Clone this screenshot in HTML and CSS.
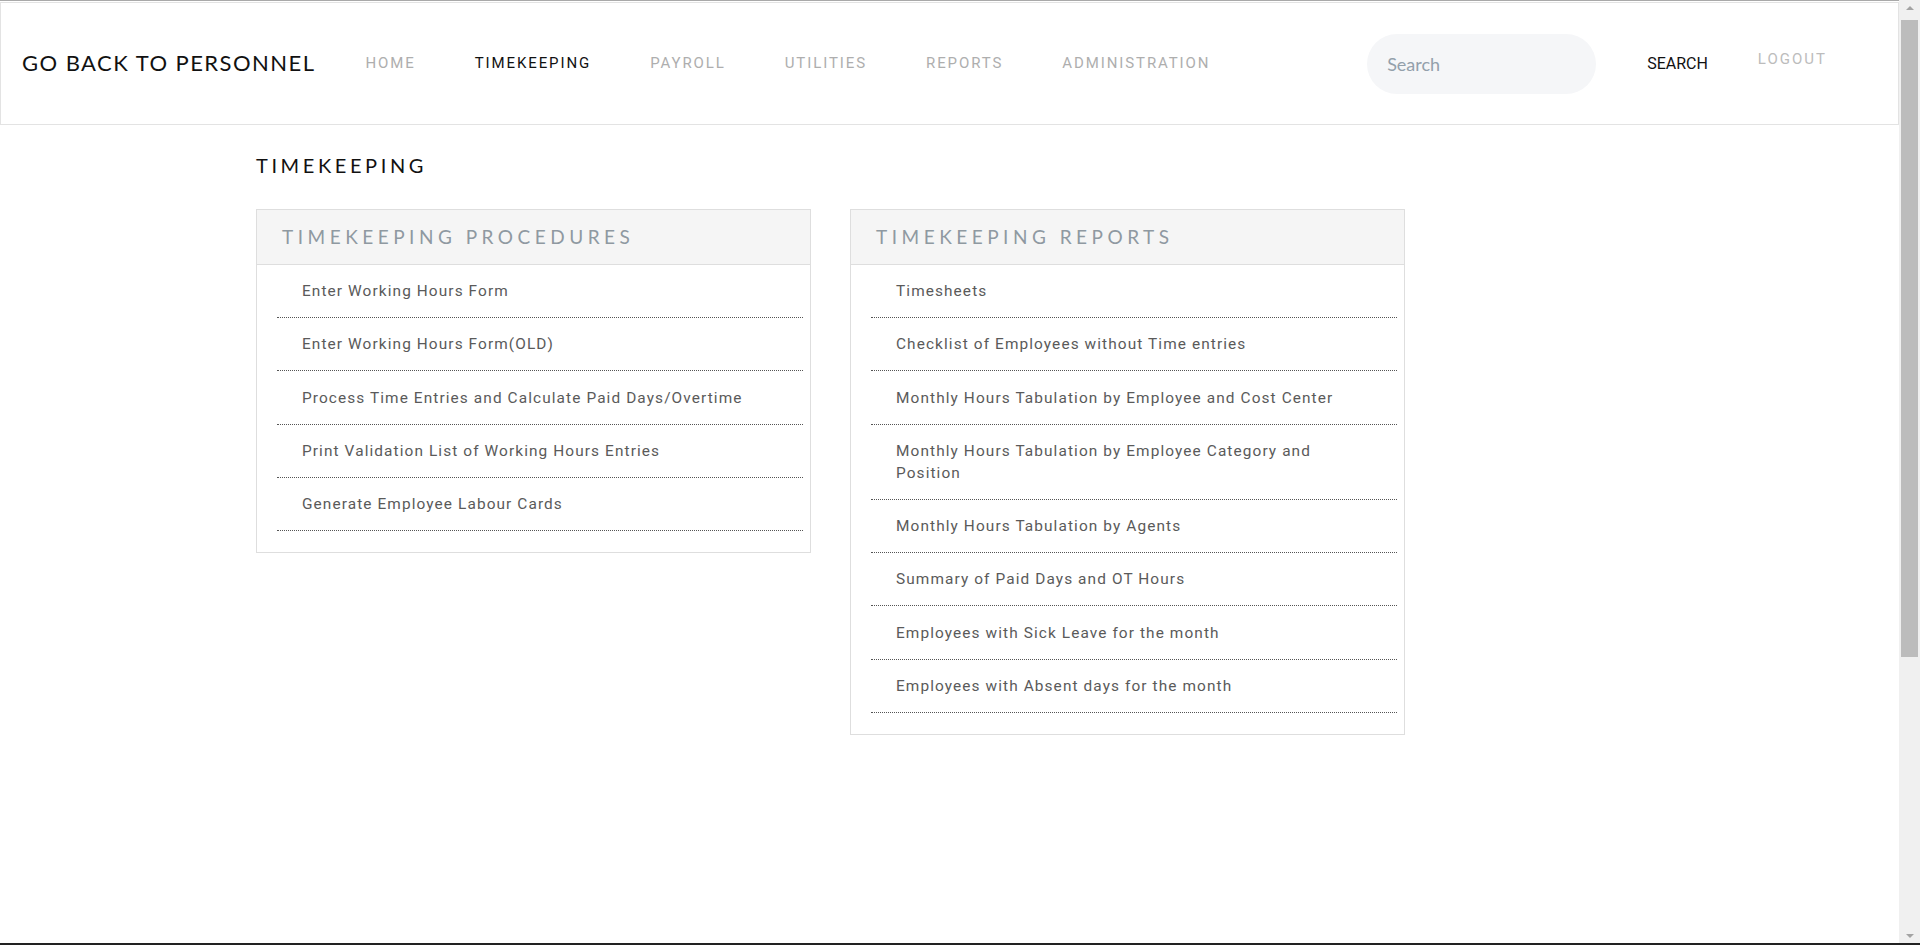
FILE: index.html
```html
<!DOCTYPE html>
<html lang="en">
<head>
<meta charset="utf-8">
<title>Timekeeping</title>
<link rel="stylesheet" href="styles.css">
</head>
<body>
<header class="topbar">
  <a class="brand" href="#">GO BACK TO PERSONNEL</a>
  <nav class="mainnav">
    <a class="navlink" href="#">HOME</a>
    <a class="navlink active" href="#">TIMEKEEPING</a>
    <a class="navlink" href="#">PAYROLL</a>
    <a class="navlink" href="#">UTILITIES</a>
    <a class="navlink" href="#">REPORTS</a>
    <a class="navlink" href="#">ADMINISTRATION</a>
  </nav>
  <form class="searchform">
    <input class="searchinput" type="text" placeholder="Search">
    <button class="searchbtn" type="button">SEARCH</button>
  </form>
  <a class="logout" href="#">LOGOUT</a>
</header>
<main class="page">
  <h1 class="pagetitle">TIMEKEEPING</h1>
  <div class="cards">
    <section class="card">
      <h2 class="cardhead">TIMEKEEPING PROCEDURES</h2>
      <ul class="linklist">
        <li class="linkitem"><a href="#">Enter Working Hours Form</a></li>
        <li class="linkitem"><a href="#">Enter Working Hours Form(OLD)</a></li>
        <li class="linkitem"><a href="#">Process Time Entries and Calculate Paid Days/Overtime</a></li>
        <li class="linkitem"><a href="#">Print Validation List of Working Hours Entries</a></li>
        <li class="linkitem"><a href="#">Generate Employee Labour Cards</a></li>
      </ul>
    </section>
    <section class="card">
      <h2 class="cardhead">TIMEKEEPING REPORTS</h2>
      <ul class="linklist">
        <li class="linkitem"><a href="#">Timesheets</a></li>
        <li class="linkitem"><a href="#">Checklist of Employees without Time entries</a></li>
        <li class="linkitem"><a href="#">Monthly Hours Tabulation by Employee and Cost Center</a></li>
        <li class="linkitem"><a href="#">Monthly Hours Tabulation by Employee Category and Position</a></li>
        <li class="linkitem"><a href="#">Monthly Hours Tabulation by Agents</a></li>
        <li class="linkitem"><a href="#">Summary of Paid Days and OT Hours</a></li>
        <li class="linkitem"><a href="#">Employees with Sick Leave for the month</a></li>
        <li class="linkitem"><a href="#">Employees with Absent days for the month</a></li>
      </ul>
    </section>
  </div>
</main>
<div class="scrollbar" aria-hidden="true">
  <span class="scroll-arrow up"></span>
  <span class="scroll-thumb"></span>
  <span class="scroll-arrow down"></span>
</div>
<div class="frame-bottom" aria-hidden="true"></div>
</body>
</html>
```
FILE: styles.css
```css
* { box-sizing: border-box; }
html {
  border-top: 1px solid #a9a9a9;
}
body {
  margin: 0 21px 0 0;
  min-height: 1350px;
  font-family: Roboto, "Liberation Sans", sans-serif;
  color: #333;
  background: #fff;
}
a { text-decoration: none; color: inherit; }

.topbar {
  margin-top: 1px;
  height: 123px;
  border: 1px solid #e3e3e3;
  display: flex;
  align-items: center;
  padding: 0 71px 3px 21px;
}
.brand {
  font-family: Lato, "Open Sans", sans-serif;
  font-size: 22px;
  letter-spacing: 1.45px;
  color: #111;
  white-space: nowrap;
}
.mainnav {
  display: flex;
  gap: 59px;
  margin-left: 50px;
  margin-top: 2px;
}
.navlink {
  font-size: 15px;
  letter-spacing: 1.9px;
  color: #aeaeae;
}
.navlink.active { color: #111; }

.searchform {
  margin-left: auto;
  margin-top: 3px;
  display: flex;
  align-items: center;
}
.searchinput {
  width: 229px;
  height: 60px;
  border: none;
  border-radius: 30px;
  background: #f5f6f8;
  padding: 0 20px;
  font-family: Lato, "Open Sans", sans-serif;
  font-size: 18px;
  color: #333;
  outline: none;
}
.searchinput::placeholder { color: #93a0ab; }
.searchbtn {
  margin-left: 51px;
  border: none;
  background: none;
  padding: 0;
  font-family: Roboto, "Liberation Sans", sans-serif;
  font-size: 16px;
  color: #111;
}
.logout {
  margin-left: 50px;
  margin-top: -7px;
  font-size: 15px;
  letter-spacing: 2px;
  color: #bcbcbc;
}

.page {
  padding: 28px 0 0 256px;
}
.pagetitle {
  margin: 0;
  font-family: Lato, "Open Sans", sans-serif;
  font-weight: 400;
  font-size: 20px;
  line-height: 24px;
  letter-spacing: 3.6px;
  color: #111;
}
.cards {
  margin-top: 32px;
  display: grid;
  grid-template-columns: 555px 555px;
  column-gap: 39px;
  align-items: start;
}
.card {
  border: 1px solid #dedede;
  background: #fff;
}
.cardhead {
  margin: 0;
  height: 55px;
  display: flex;
  align-items: center;
  padding: 0 0 2px 25px;
  background: #f5f5f5;
  border-bottom: 1px solid #dedede;
  font-family: Lato, "Open Sans", sans-serif;
  font-weight: 400;
  font-size: 19px;
  letter-spacing: 4.5px;
  color: #8f99a1;
}
.linklist {
  list-style: none;
  margin: 0;
  padding: 0 7px 21px 20px;
}
.linkitem {
  padding: 15px 22px 15px 25px;
  line-height: 22px;
  font-size: 15.4px;
  letter-spacing: 1.1px;
  color: #5a5a5a;
  border-bottom: 1px dotted #555;
}
.linkitem:first-child { padding-top: 15px; }
.linkitem:nth-child(n+2) { padding-top: 15.3px; }

.scrollbar {
  position: fixed;
  top: 0;
  right: 0;
  width: 21px;
  height: 100%;
  background: #f0f0f0;
  display: flex;
  flex-direction: column;
  align-items: center;
}
.scroll-arrow {
  width: 0;
  height: 0;
  border-left: 4px solid transparent;
  border-right: 4px solid transparent;
}
.scroll-arrow.up {
  margin-top: 6px;
  border-bottom: 4px solid #a3a3a3;
}
.scroll-thumb {
  margin-top: 10px;
  width: 17px;
  height: 637px;
  background: #bcbcbc;
}
.scroll-arrow.down {
  margin-top: auto;
  margin-bottom: 7px;
  border-top: 4px solid #a3a3a3;
}
.frame-bottom {
  position: fixed;
  left: 0;
  right: 0;
  bottom: 0;
  height: 2px;
  background: #222;
}
```
